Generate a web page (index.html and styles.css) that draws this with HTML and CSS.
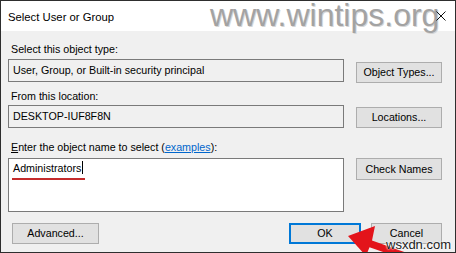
FILE: index.html
```html
<!DOCTYPE html>
<html>
<head>
<meta charset="utf-8">
<link rel="stylesheet" href="styles.css">
</head>
<body>
<div class="window">
  <div class="titlebar">
    <span class="title">Select User or Group</span>
    <span class="brand">www.wintips.org</span>
    <svg class="close" width="10" height="10" viewBox="0 0 10 10"><path d="M0.5 0.5 L9.5 9.5 M9.5 0.5 L0.5 9.5" stroke="#111" stroke-width="1" fill="none"/></svg>
  </div>
  <div class="content">
    <div class="label l1">Select this object type:</div>
    <div class="row r1">
      <div class="field ro">User, Group, or Built-in security principal</div>
      <div class="btn b1">Object Types...</div>
    </div>
    <div class="label l2">From this location:</div>
    <div class="row r2">
      <div class="field ro">DESKTOP-IUF8F8N</div>
      <div class="btn b2">Locations...</div>
    </div>
    <div class="label l3"><u>E</u>nter the object name to select (<span class="link">examples</span>):</div>
    <div class="row r3">
      <div class="field area"><span class="typed">Administrators</span><span class="caret"></span></div>
      <div class="btn b3">Check Names</div>
    </div>
    <div class="footer">
      <div class="btn adv">Advanced...</div>
      <div class="btn ok">OK</div>
      <div class="btn cancel">Cancel</div>
    </div>
  </div>
  <svg class="arrow" width="456" height="253" viewBox="0 0 456 253">
    <polygon points="348,236 375,226 372,240.6 419,257.2 416.7,263.8 369.5,247.2 366,256" fill="#e3141b"/>
  </svg>
  <span class="mark">wsxdn.com</span>
</div>
</body>
</html>
```
FILE: styles.css
```css
html, body {
  margin: 0;
  padding: 0;
  background: #f0f0f0;
}
.window {
  position: relative;
  width: 456px;
  height: 253px;
  box-sizing: border-box;
  border: 1px solid #2e2e2e;
  background: #f0f0f0;
  font-family: "Liberation Sans", Arial, sans-serif;
  font-size: 10.7px;
  color: #000;
  overflow: hidden;
}
.titlebar {
  position: relative;
  height: 30px;
  background: #fff;
  display: flex;
  align-items: center;
}
.title {
  padding-left: 7px;
  font-size: 11.3px;
  padding-top: 2px;
}
.brand {
  position: absolute;
  left: 209px;
  top: -6px;
  font-size: 32px;
  line-height: 40px;
  color: #a3a3a3;
  text-shadow: 1px 1px 0 #d6d6d6;
  letter-spacing: 0;
}
.close {
  position: absolute;
  left: 435px;
  top: 10px;
}
.content {
  padding: 11px 13px 0 7px;
  display: flex;
  flex-direction: column;
}
.label {
  line-height: 14px;
  height: 14px;
  padding-left: 3px;
}
.l2 { margin-top: 6px; }
.l3 { margin-top: 12px; }
.link {
  color: #0066cc;
  text-decoration: underline;
}
.row {
  display: grid;
  grid-template-columns: 336px 86px;
  column-gap: 12px;
  align-items: start;
}
.r1 { margin-top: 3px; }
.r2 { margin-top: 2px; }
.r3 { margin-top: 4px; }
.field {
  box-sizing: border-box;
  border: 1px solid #7a7a7a;
  height: 23px;
  line-height: 21px;
  padding-left: 4px;
  background: #f0f0f0;
}
.area {
  height: 54px;
  background: #fff;
  line-height: 18px;
  padding-left: 4px;
  position: relative;
}
.typed {
  position: relative;
  display: inline-block;
}
.typed::after {
  content: "";
  position: absolute;
  left: -1px;
  right: -4px;
  top: 19px;
  height: 2px;
  background: #c42b2b;
}
.caret {
  display: inline-block;
  width: 1px;
  height: 13px;
  background: #000;
  vertical-align: -2px;
  margin-left: 1px;
}
.btn {
  box-sizing: border-box;
  height: 21px;
  line-height: 19px;
  border: 1px solid #adadad;
  background: #e1e1e1;
  text-align: center;
}
.b1 { margin-top: 3px; }
.b2 { margin-top: 2px; }
.b3 { height: 22px; line-height: 20px; }
.footer {
  display: flex;
  margin-top: 11px;
  padding-left: 4px;
  gap: 10px;
}
.adv { width: 87px; }
.ok {
  width: 72px;
  margin-left: auto;
  border: 2px solid #0078d7;
  line-height: 17px;
}
.cancel { width: 71px; }
.arrow {
  position: absolute;
  left: -1px;
  top: -1px;
  pointer-events: none;
}
.mark {
  position: absolute;
  left: 385px;
  top: 236px;
  font-size: 13px;
  line-height: 15px;
  color: #1a1a1a;
  text-shadow: 0 0 2px #fff, 0 0 2px #fff;
}
```
